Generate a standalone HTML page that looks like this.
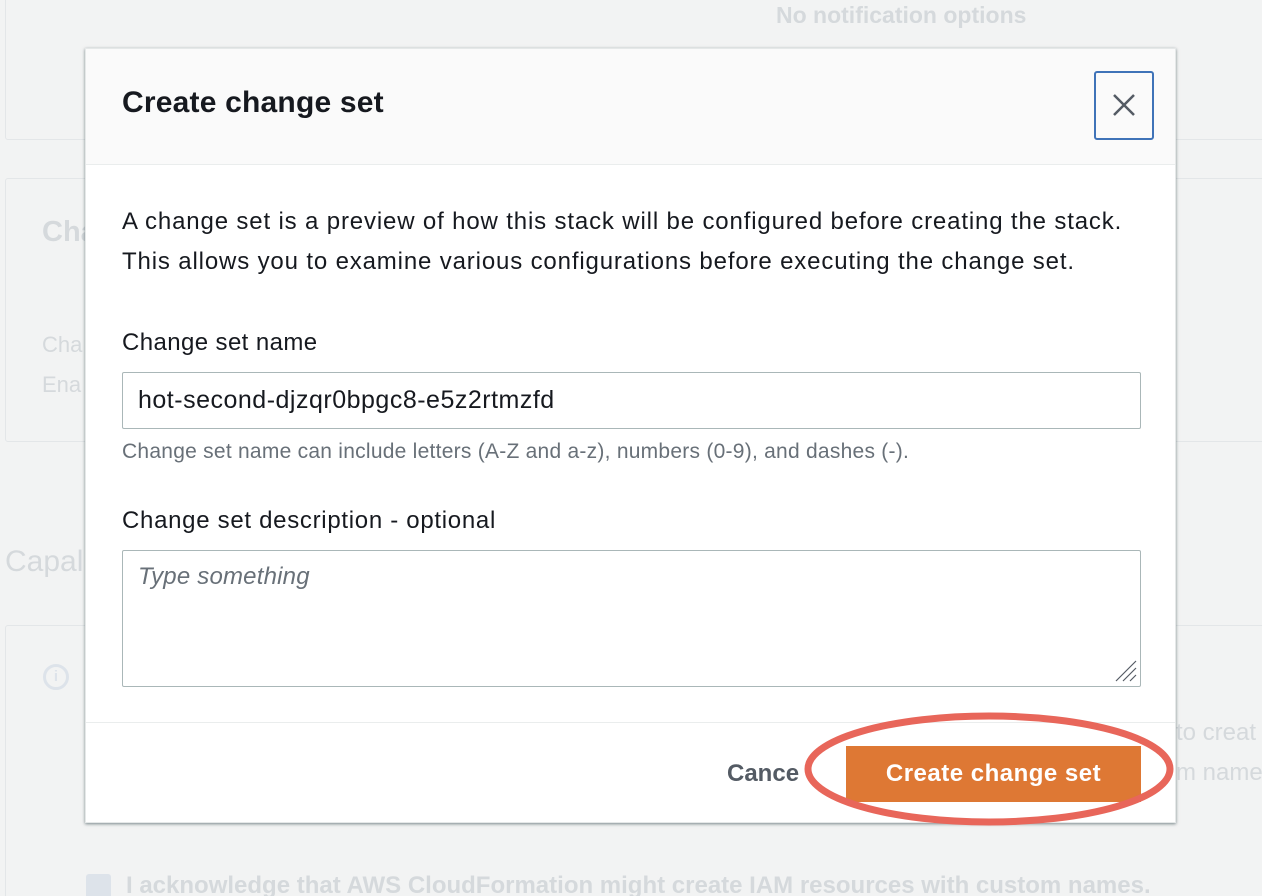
<!DOCTYPE html>
<html style="height:896px;overflow:hidden"><head><meta charset="utf-8"><style>
body{margin:0;width:1262px;height:896px;background:#f2f3f3;font-family:"Liberation Sans",sans-serif;position:relative;overflow:hidden}
.p{position:absolute;border:1px solid #e3e6e8;border-radius:3px;background:#f2f3f3}
.f{position:absolute;color:#d5d9dc;white-space:nowrap}
.m{position:absolute;left:85px;top:48px;width:1091px;height:775px;background:#fff;box-shadow:0 1px 3px rgba(0,28,36,.5);border:1px solid #e5e8e8;box-sizing:border-box}
.t{position:absolute;color:#16191f;white-space:nowrap}
</style></head><body>
<div class="p" style="left:5px;top:-10px;width:1280px;height:148px"></div>
<div class="f" style="left:776px;top:2px;font-size:23px;font-weight:bold">No notification options</div>
<div class="p" style="left:5px;top:178px;width:1280px;height:262px"></div>
<div class="f" style="left:42px;top:216px;font-size:29px;font-weight:bold">Cha</div>
<div class="f" style="left:42px;top:332px;font-size:22px">Cha</div>
<div class="f" style="left:42px;top:372px;font-size:22px">Ena</div>
<div class="f" style="left:5px;top:545px;font-size:30px">Capal</div>
<div class="p" style="left:5px;top:625px;width:1280px;height:300px"></div>
<div style="position:absolute;left:43px;top:664px;width:26px;height:26px;border:3px solid #dde3ea;border-radius:50%;box-sizing:border-box;color:#dde3ea;font-size:15px;font-weight:bold;text-align:center;line-height:20px">i</div>
<div class="f" style="left:1176px;top:719px;font-size:24px">to creat</div>
<div class="f" style="left:1176px;top:759px;font-size:24px">m name</div>
<div style="position:absolute;left:86px;top:874px;width:25px;height:25px;background:#dde3ea;border-radius:3px"></div>
<div class="f" style="left:126px;top:872px;font-size:24px;font-weight:bold">I acknowledge that AWS CloudFormation might create IAM resources with custom names.</div>

<div class="m">
 <div style="position:absolute;left:0;top:0;right:0;height:115px;background:#fafafa;border-bottom:1px solid #eaeded"></div>
 <div class="t" style="left:36px;top:37px;font-size:30px;font-weight:bold;letter-spacing:0.2px">Create change set</div>
 <div style="position:absolute;left:1008px;top:22px;width:60px;height:69px;border:2px solid #3f73b8;border-radius:3px;box-sizing:border-box"></div>
 <svg style="position:absolute;left:1026px;top:44px" width="24" height="24"><path d="M2 2L22 22M22 2L2 22" stroke="#545b64" stroke-width="2.5"/></svg>
 <div class="t" style="left:36px;top:153px;font-size:24px;line-height:40px;letter-spacing:0.85px">A change set is a preview of how this stack will be configured before creating the stack.<br>This allows you to examine various configurations before executing the change set.</div>
 <div class="t" style="left:36px;top:280px;font-size:24px;letter-spacing:0.4px">Change set name</div>
 <div style="position:absolute;left:36px;top:323px;width:1019px;height:57px;border:1px solid #aab7b8;border-radius:2px;box-sizing:border-box"></div>
 <div class="t" style="left:52px;top:337px;font-size:25px;letter-spacing:0.5px">hot-second-djzqr0bpgc8-e5z2rtmzfd</div>
 <div class="t" style="left:36px;top:391px;font-size:21px;color:#687078;letter-spacing:0.25px">Change set name can include letters (A-Z and a-z), numbers (0-9), and dashes (-).</div>
 <div class="t" style="left:36px;top:458px;font-size:24px;letter-spacing:0.7px">Change set description - optional</div>
 <div style="position:absolute;left:36px;top:501px;width:1019px;height:137px;border:1px solid #aab7b8;border-radius:2px;box-sizing:border-box"></div>
 <div class="t" style="left:52px;top:514px;font-size:24px;font-style:italic;color:#687078;letter-spacing:0.2px">Type something</div>
 <svg style="position:absolute;left:1026px;top:608px" width="26" height="26"><path d="M24 4L4 24M24 11L11 24M24 18L18 24" stroke="#545b64" stroke-width="1.2"/></svg>
 <div style="position:absolute;left:0;right:0;top:673px;border-top:1px solid #eaeded"></div>
 <div class="t" style="left:641px;top:711px;font-size:24px;font-weight:bold;color:#545b64">Cance</div>
 <div style="position:absolute;left:760px;top:697px;width:295px;height:56px;background:#de7834"></div>
 <div class="t" style="left:760px;top:711px;width:295px;text-align:center;font-size:24px;font-weight:bold;color:#fff;letter-spacing:0.5px">Create change set</div>
</div>
<svg style="position:absolute;left:0;top:0" width="1262" height="896"><ellipse cx="989" cy="769" rx="181" ry="53" fill="none" stroke="#e8665a" stroke-width="7"/></svg>
</body></html>
